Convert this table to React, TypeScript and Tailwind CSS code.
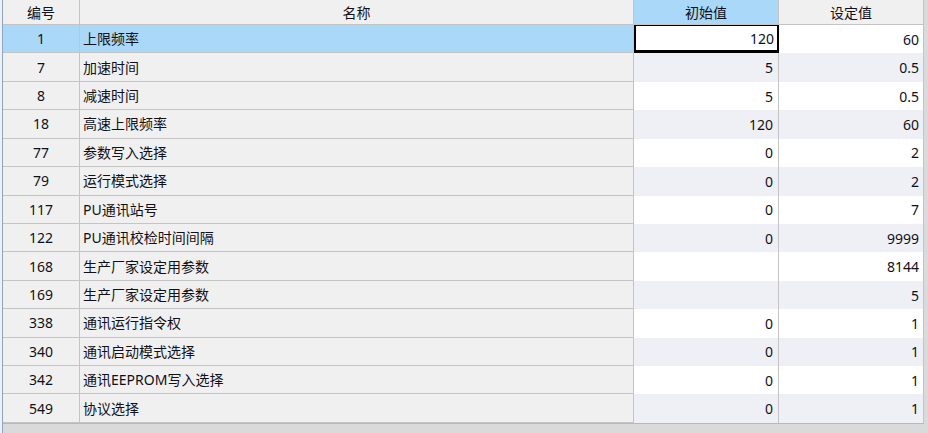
import React from 'react';

interface Param {
  no: string;
  name: string;
  init: string;
  value: string;
}

const rows: Param[] = [
  { no: '1', name: '上限频率', init: '120', value: '60' },
  { no: '7', name: '加速时间', init: '5', value: '0.5' },
  { no: '8', name: '减速时间', init: '5', value: '0.5' },
  { no: '18', name: '高速上限频率', init: '120', value: '60' },
  { no: '77', name: '参数写入选择', init: '0', value: '2' },
  { no: '79', name: '运行模式选择', init: '0', value: '2' },
  { no: '117', name: 'PU通讯站号', init: '0', value: '7' },
  { no: '122', name: 'PU通讯校检时间间隔', init: '0', value: '9999' },
  { no: '168', name: '生产厂家设定用参数', init: '', value: '8144' },
  { no: '169', name: '生产厂家设定用参数', init: '', value: '5' },
  { no: '338', name: '通讯运行指令权', init: '0', value: '1' },
  { no: '340', name: '通讯启动模式选择', init: '0', value: '1' },
  { no: '342', name: '通讯EEPROM写入选择', init: '0', value: '1' },
  { no: '549', name: '协议选择', init: '0', value: '1' },
];

export default function App() {
  return (
    <div
      className="w-[928px] h-[433px] overflow-hidden bg-[#dadada] flex text-[14px] text-[#101018]"
      style={{ fontFamily: '"Noto Sans", "Noto Sans CJK SC", sans-serif' }}
    >
      {/* window edge */}
      <div className="w-[3px] h-full bg-[#eef0f3] border-r border-[#8ea6c6] shrink-0" />

      <div className="flex flex-col">
        <div className="grid grid-cols-[77px_554px_145px_145px] bg-white">
          {/* header */}
          <div className="h-[25px] flex items-center justify-center bg-[#f0f0f0] border-r border-b border-[#c4c4c4]">
            编号
          </div>
          <div className="h-[25px] flex items-center justify-center bg-[#f0f0f0] border-r border-b border-[#c4c4c4]">
            名称
          </div>
          <div className="h-[25px] flex items-center justify-center bg-[#aad8f8] border-r border-b border-[#c4c4c4]">
            初始值
          </div>
          <div className="h-[25px] flex items-center justify-center bg-[#f0f0f0] border-r border-b border-[#c4c4c4]">
            设定值
          </div>

          {rows.map((r, i) => {
            const selected = i === 0;
            const stripe = i % 2 === 1 ? 'bg-[#eef0f6]' : 'bg-white';
            return (
              <React.Fragment key={r.no}>
                <div
                  className={`h-[28.43px] flex items-center justify-center border-r border-b border-[#c4c4c4] ${
                    selected ? 'bg-[#aad8f8]' : 'bg-[#f0f0f0]'
                  }`}
                >
                  {r.no}
                </div>
                <div
                  className={`h-[28.43px] flex items-center pl-[3px] border-r border-b border-[#c4c4c4] ${
                    selected ? 'bg-[#aad8f8]' : 'bg-[#f0f0f0]'
                  }`}
                >
                  {r.name}
                </div>
                {selected ? (
                  <div className="h-[28.43px] flex items-center justify-end pr-[3px] bg-white border-t border-l-2 border-r-2 border-b-[3px] border-black">
                    {r.init}
                  </div>
                ) : (
                  <div className={`h-[28.43px] flex items-center justify-end pr-[5px] border-r border-[#c4c4c4] ${stripe}`}>
                    {r.init}
                  </div>
                )}
                <div className={`h-[28.43px] flex items-center justify-end pr-[4px] border-r border-[#c4c4c4] ${stripe}`}>
                  {r.value}
                </div>
              </React.Fragment>
            );
          })}
        </div>
        <div className="h-px w-[921px] bg-[#b8b8b8]" />
      </div>
    </div>
  );
}
